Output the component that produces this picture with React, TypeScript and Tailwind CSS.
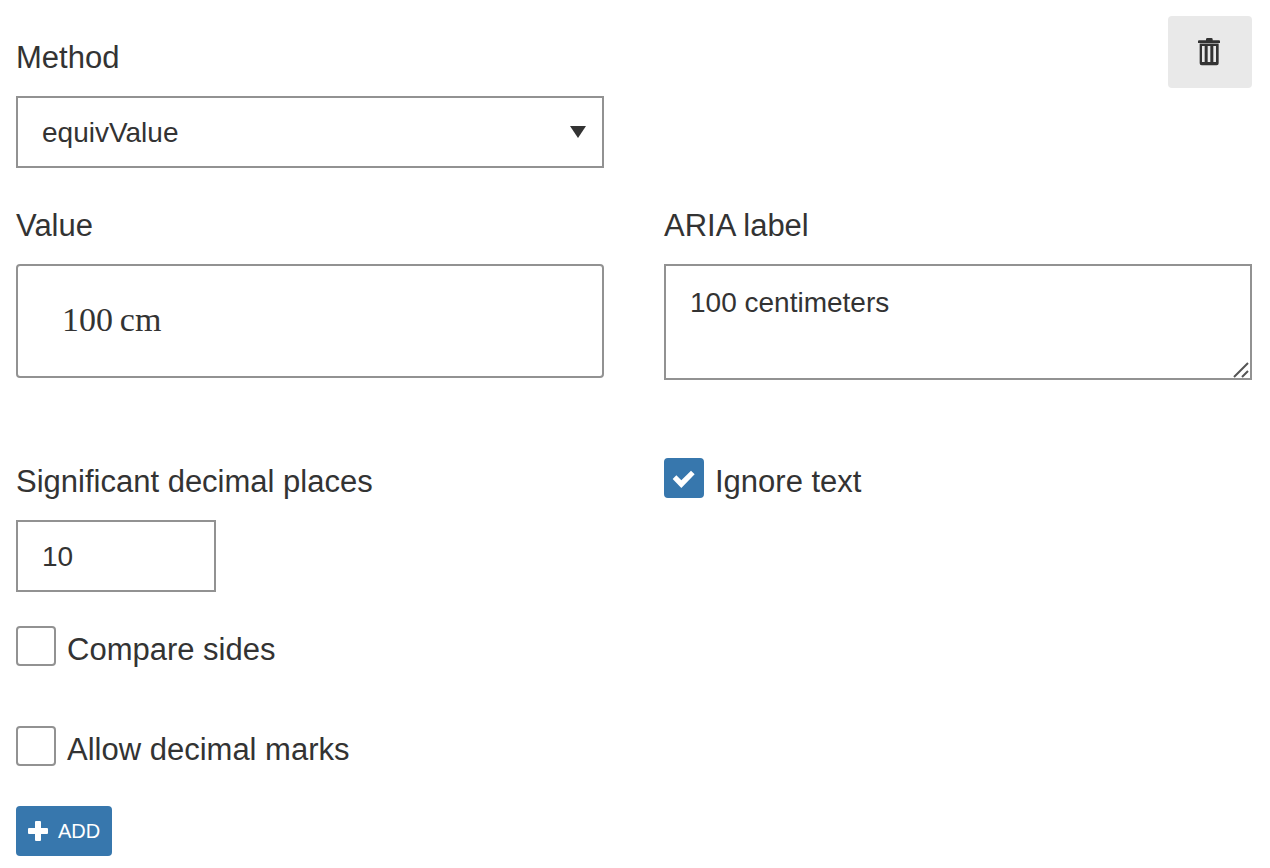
import React, { useState } from 'react';

const labelClass = 'text-[31px] leading-[48px]';
const fieldClass = 'w-full border-2 border-[#929292] bg-white text-[28px] text-[#333] outline-none focus:border-[#3777ad]';

const TrashIcon = () => (
    <svg width="22" height="28" viewBox="0 0 66 84" aria-hidden="true">
        <path d="M24 7V4Q24 0 28 0H40Q44 0 44 4V7H63Q66 7 66 10V15H0V10Q0 7 3 7Z" fill="#333" />
        <path d="M5 15H62V18H5Z" fill="#999" />
        <path
            d="M5 18H62V76Q62 82 56 82H11Q5 82 5 76ZM12 24V72H20V24ZM29 24V72H37V24ZM46 24V72H54V24Z"
            fill="#333"
            fillRule="evenodd"
        />
    </svg>
);

const CheckField = ({ id, label, initial = false }: { id: string; label: string; initial?: boolean }) => {
    const [checked, setChecked] = useState(initial);

    return (
        <div className="flex items-start gap-[11px]">
            <div className="relative size-10 shrink-0">
                <input
                    id={id}
                    type="checkbox"
                    checked={checked}
                    onChange={(e) => setChecked(e.target.checked)}
                    className="block size-10 appearance-none rounded-sm border-2 border-[#929292] bg-white checked:border-[#3777ad] checked:bg-[#3777ad]"
                />
                {checked && (
                    <svg className="pointer-events-none absolute inset-0" width="40" height="40" viewBox="0 0 120 120" aria-hidden="true">
                        <path d="M26 63L37 52L52 67L81 38L92 49L52 90Z" fill="#fff" />
                    </svg>
                )}
            </div>
            <label htmlFor={id} className={labelClass}>{label}</label>
        </div>
    );
};

export default function App() {
    const [method, setMethod] = useState('equivValue');
    const [value, setValue] = useState('100\u2009cm');
    const [ariaLabel, setAriaLabel] = useState('100 centimeters');
    const [places, setPlaces] = useState('10');

    return (
        <form
            onSubmit={(e) => e.preventDefault()}
            className="bg-white pt-4 pr-[18px] pb-3 pl-4 font-['Liberation_Sans',Arial,sans-serif] text-[#333]"
        >
            <div className="grid grid-cols-2 items-start gap-x-[60px]">
                <div className="flex flex-col gap-3.5 pt-[18px]">
                    <label htmlFor="method" className={labelClass}>Method</label>
                    <div className="relative">
                        <select
                            id="method"
                            value={method}
                            onChange={(e) => setMethod(e.target.value)}
                            className={`${fieldClass} block h-[72px] appearance-none px-6 pt-0.5`}
                        >
                            <option>equivValue</option>
                            <option>equivLiteral</option>
                            <option>equivSymbolic</option>
                        </select>
                        <svg className="pointer-events-none absolute top-[30px] right-[18px]" width="16" height="12" viewBox="0 0 16 12" aria-hidden="true">
                            <path d="M0 0H16L8 12Z" fill="#333" />
                        </svg>
                    </div>
                </div>
                <button
                    type="button"
                    aria-label="Delete"
                    className="flex h-[72px] w-[84px] items-center justify-center justify-self-end rounded-sm bg-[#e9e9e9] pr-0.5"
                >
                    <TrashIcon />
                </button>
            </div>

            <div className="mt-[34px] grid grid-cols-2 items-start gap-x-[60px]">
                <div className="flex flex-col gap-3.5">
                    <label htmlFor="value" className={labelClass}>Value</label>
                    <input
                        id="value"
                        value={value}
                        onChange={(e) => setValue(e.target.value)}
                        className="h-[114px] w-full rounded-sm border-2 border-[#929292] bg-white px-11 pb-0.5 font-['Liberation_Serif','Times_New_Roman',serif] text-[34px] outline-none focus:border-[#3777ad]"
                    />
                </div>
                <div className="flex flex-col gap-3.5">
                    <label htmlFor="aria" className={labelClass}>ARIA label</label>
                    <div className="relative">
                        <textarea
                            id="aria"
                            value={ariaLabel}
                            onChange={(e) => setAriaLabel(e.target.value)}
                            className={`${fieldClass} block h-[116px] resize-none px-6 py-4 leading-[42px]`}
                        />
                        <svg className="pointer-events-none absolute right-[3px] bottom-0.5" width="16" height="16" viewBox="0 0 16 16" aria-hidden="true">
                            <path d="M1 15L15 1M9 15L15 9" stroke="#555" strokeWidth="2" fill="none" />
                        </svg>
                    </div>
                </div>
            </div>

            <div className="mt-[78px] grid grid-cols-2 items-start gap-x-[60px]">
                <div className="flex flex-col gap-3.5">
                    <label htmlFor="places" className={labelClass}>Significant decimal places</label>
                    <div className="w-[200px]">
                        <input
                            id="places"
                            inputMode="numeric"
                            value={places}
                            onChange={(e) => setPlaces(e.target.value)}
                            className={`${fieldClass} block h-[72px] px-6 pt-0.5`}
                        />
                    </div>
                </div>
                <CheckField id="ignore-text" label="Ignore text" initial />
            </div>

            <div className="mt-[34px] flex flex-col gap-[52px]">
                <CheckField id="compare-sides" label="Compare sides" />
                <CheckField id="decimal-marks" label="Allow decimal marks" />
            </div>

            <button type="button" className="mt-8 flex h-[50px] items-center gap-2.5 rounded-sm bg-[#3777ad] px-3 text-xl text-white">
                <svg width="20" height="20" viewBox="0 0 20 20" aria-hidden="true">
                    <path d="M7 1Q7 0 8 0H12Q13 0 13 1V7H19Q20 7 20 8V12Q20 13 19 13H13V19Q13 20 12 20H8Q7 20 7 19V13H1Q0 13 0 12V8Q0 7 1 7H7Z" fill="#fff" />
                </svg>
                ADD
            </button>
        </form>
    );
}
